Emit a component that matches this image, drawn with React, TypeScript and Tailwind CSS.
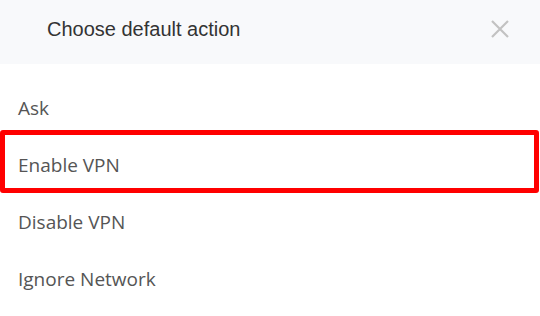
const actions = ['Ask', 'Enable VPN', 'Disable VPN', 'Ignore Network'];

export default function App() {
  return (
    <div className="h-[316px] w-[540px] overflow-hidden bg-white">
      {/* Header */}
      <div className="flex h-[64px] items-center justify-between bg-[#f8f9fb] pl-[47px] pr-[31px]">
        <h2
          className="mb-[7px] text-[20px] leading-none text-[#333333]"
          style={{ fontFamily: '"Liberation Sans", Arial, sans-serif' }}
        >
          Choose default action
        </h2>
        <svg width="18" height="18" viewBox="0 0 18 18" className="mb-[6px] text-[#c2c2c2]">
          <path d="M1 1L17 17M17 1L1 17" stroke="currentColor" strokeWidth="2.2" fill="none" />
        </svg>
      </div>

      {/* Options */}
      <ul
        className="pt-[16px]"
        style={{ fontFamily: '"Open Sans", sans-serif' }}
      >
        {actions.map((label) => (
          <li
            key={label}
            className="relative flex h-[57px] items-center px-[18px] text-[19px] text-[#555555]"
          >
            {label}
            {label === 'Enable VPN' && (
              <span className="pointer-events-none absolute -top-[7px] bottom-px left-0 right-px rounded-[3px] border-[5px] border-[#ff0000]" />
            )}
          </li>
        ))}
      </ul>
    </div>
  );
}
